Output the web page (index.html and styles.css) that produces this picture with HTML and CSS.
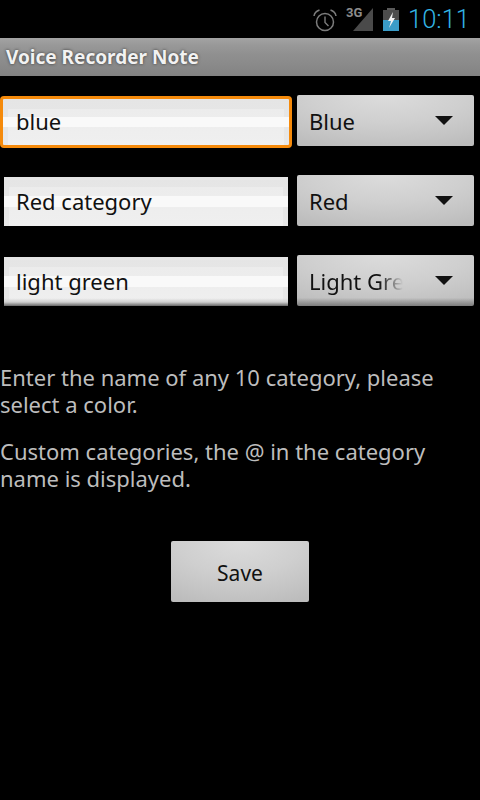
FILE: index.html
```html
<!DOCTYPE html>
<html lang="en">

<head>
  <meta charset="UTF-8">
  <meta name="viewport" content="width=device-width, initial-scale=1.0">
  <title>Voice Recorder Note</title>
  <link rel="stylesheet" href="styles.css">
</head>

<body>
  <div class="status-bar">
    <svg class="icon-alarm" width="24" height="23" viewBox="0 0 24 23">
      <circle cx="12" cy="13" r="8.500" fill="none" stroke="#7c7c7c" stroke-width="1.5" />
      <path d="M12 7.500v6l3.500 3.500" fill="none" stroke="#7c7c7c" stroke-width="1.4" />
      <path d="M1 7C1.500 4 3.500 2 6.500 1M23 7C22.500 4 20.500 2 17.500 1" fill="none" stroke="#7c7c7c" stroke-width="1.5" />
    </svg>
    <div class="signal">
      <span class="signal-label">3G</span>
      <svg width="20" height="23" viewBox="0 0 20 23">
        <path d="M0 23L20 0V23Z" fill="#4a4a4a" />
      </svg>
    </div>
    <svg class="icon-battery" width="16" height="23" viewBox="0 0 16 23">
      <path d="M4 0h8v2H4Z" fill="#5a5a5a" />
      <path d="M0 2h16v10H0Z" fill="#4c4c4c" />
      <path d="M0 12h16v11H0Z" fill="#3a9cc8" />
      <path d="M10 4L5 13h3L6 20l6-10H9Z" fill="#f2f2f2" />
    </svg>
    <span class="clock">10:11</span>
  </div>

  <div class="title-bar">Voice Recorder Note</div>

  <div class="form">
    <div class="form-row">
      <div class="text-field focused"><span>blue</span></div>
      <div class="spinner"><span class="spinner-text">Blue</span><i class="arrow"></i></div>
    </div>
    <div class="form-row">
      <div class="text-field"><span>Red category</span></div>
      <div class="spinner"><span class="spinner-text">Red</span><i class="arrow"></i></div>
    </div>
    <div class="form-row last">
      <div class="text-field"><span>light green</span></div>
      <div class="spinner"><span class="spinner-text fade">Light Gre</span><i class="arrow"></i></div>
    </div>
  </div>

  <div class="help">
    <p>Enter the name of any 10 category, please select a color.</p>
    <p>Custom categories, the @ in the category name is displayed.</p>
  </div>

  <div class="actions">
    <button type="button" class="save-btn">Save</button>
  </div>
</body>

</html>
```

FILE: styles.css
```css
body {
  margin: 0;
  padding: 0;
  background-color: #000;
  font-family: "Noto Sans", Roboto, sans-serif;
}

.status-bar {
  display: flex;
  align-items: center;
  justify-content: flex-end;
  height: 38px;
  padding-right: 10px;
  box-sizing: border-box;
}

.icon-alarm {
  margin-right: 9px;
  margin-top: 2px;
}

.signal {
  position: relative;
  width: 27px;
  height: 23px;
  margin-right: 10px;
  display: flex;
  justify-content: flex-end;
}

.signal-label {
  position: absolute;
  left: 0;
  top: -3px;
  color: #8c8c8c;
  font-family: Roboto, sans-serif;
  font-size: 13px;
  font-weight: bold;
}

.icon-battery {
  margin-right: 9px;
}

.clock {
  color: #33b5e5;
  font-family: Roboto, sans-serif;
  font-size: 25.500px;
  font-weight: 300;
  line-height: 38px;
}

.title-bar {
  height: 38px;
  line-height: 39px;
  padding-left: 6px;
  color: #f2f2f2;
  font-size: 19px;
  font-weight: bold;
  text-shadow: 0 0 3px #333;
  background: linear-gradient(#a3a3a3 0, #989898 20%, #8f8f8f 45%, #8a8a8a 70%, #828282 100%);
}

.form {
  padding: 19px 6px 0 0;
}

.form-row {
  display: flex;
  align-items: flex-end;
  height: 51px;
  margin-bottom: 29px;
}

.text-field {
  display: flex;
  align-items: center;
  width: 284px;
  height: 49px;
  margin: 0 9px 0 4px;
  padding: 0 0 2px 12px;
  box-sizing: border-box;
  color: #111;
  font-size: 22px;
  background:
    linear-gradient(transparent 39%, #f9f9f9 39%, #f9f9f9 61%, transparent 61%),
    linear-gradient(#ececec, #f0f0f0) center 10px / calc(100% - 10px) 100% no-repeat,
    linear-gradient(#e5e5e5, #e8e8e8);
}

.text-field.focused {
  width: 292px;
  height: 52px;
  margin: 0 5px -2px 0;
  padding: 0 0 2px 13px;
  border: 3px solid #f58a0b;
  border-radius: 4px;
}

.form-row.last .text-field {
  background:
    linear-gradient(transparent 84%, #cfcfcf 92%, #666 100%),
    linear-gradient(transparent 39%, #f9f9f9 39%, #f9f9f9 61%, transparent 61%),
    linear-gradient(#ececec, #f0f0f0) center 10px / calc(100% - 10px) 100% no-repeat,
    linear-gradient(#e5e5e5, #e8e8e8);
}

.spinner {
  display: flex;
  align-items: center;
  justify-content: space-between;
  width: 177px;
  height: 51px;
  padding: 0 21px 0 12px;
  box-sizing: border-box;
  border-radius: 2px;
  color: #111;
  font-size: 22px;
  background: radial-gradient(ellipse 90% 110% at 50% 0, #dcdcdc, #cfcfcf 50%, #c4c4c4 80%, #bcbcbc);
}

.form-row.last .spinner {
  background:
    linear-gradient(transparent 84%, #7c7c7c 100%),
    radial-gradient(ellipse 90% 110% at 50% 0, #dcdcdc, #cfcfcf 50%, #c4c4c4 80%, #bcbcbc);
}

.spinner-text {
  white-space: nowrap;
}

.spinner-text.fade {
  -webkit-mask-image: linear-gradient(90deg, #000 70px, transparent 94px);
  mask-image: linear-gradient(90deg, #000 70px, transparent 94px);
}

.arrow {
  width: 0;
  height: 0;
  border-left: 9px solid transparent;
  border-right: 9px solid transparent;
  border-top: 9px solid #111;
}

.help {
  padding-top: 29px;
  color: #bdbdbd;
  font-size: 22px;
  line-height: 27px;
}

.help p {
  margin: 0 0 20px;
}

.actions {
  display: flex;
  justify-content: center;
  padding-top: 29px;
}

.save-btn {
  width: 138px;
  height: 61px;
  padding: 2px 0 0;
  border: none;
  border-radius: 2px;
  color: #111;
  font-family: inherit;
  font-size: 21px;
  background: radial-gradient(ellipse 90% 110% at 50% 0, #dcdcdc, #cfcfcf 50%, #c4c4c4 80%, #bcbcbc);
}
```
